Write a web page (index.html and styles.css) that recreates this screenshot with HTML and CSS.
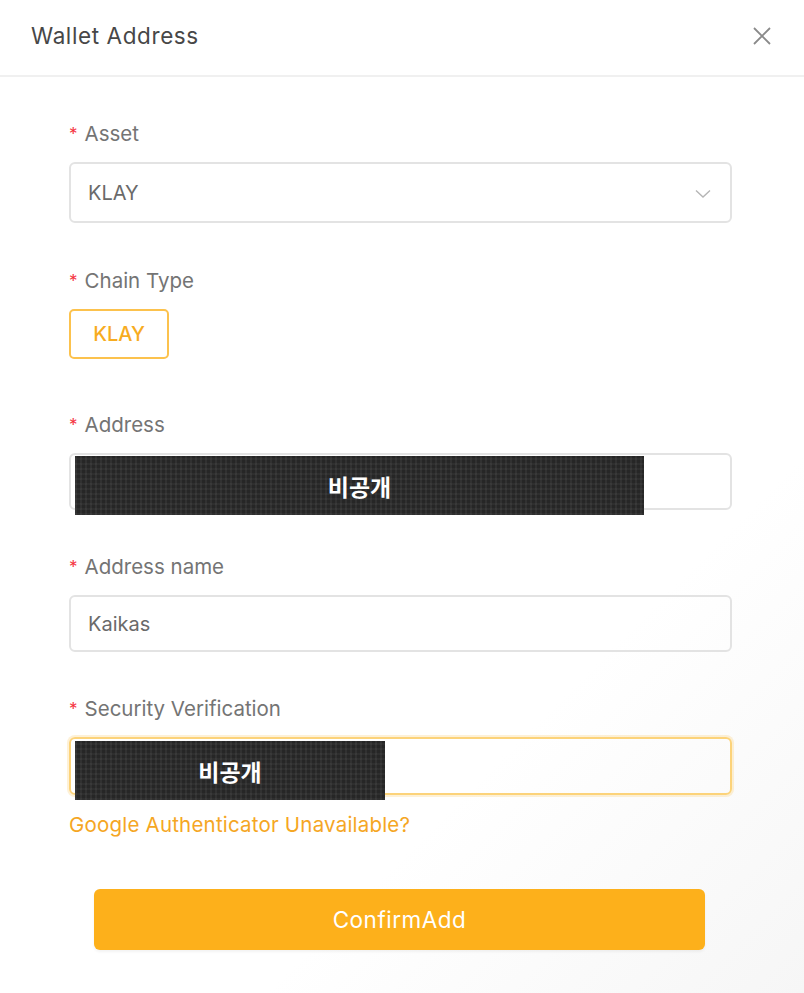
FILE: index.html
```html
<!DOCTYPE html>
<html>
<head>
<meta charset="utf-8">
<link rel="stylesheet" href="styles.css">
</head>
<body>
<div class="modal">
  <header class="head">
    <div class="title">Wallet Address</div>
    <svg class="close" width="20" height="20" viewBox="0 0 20 20"><path d="M2 2 L18 18 M18 2 L2 18" stroke="#8a8a8a" stroke-width="1.8" fill="none"/></svg>
  </header>
  <form class="form">
    <div class="field f-asset">
      <label class="label"><span class="req">*</span>Asset</label>
      <div class="input select">
        <span class="val">KLAY</span>
        <svg class="chev" width="16" height="10" viewBox="0 0 16 10"><path d="M1 1.5 L8 8 L15 1.5" stroke="#b5b5b5" stroke-width="1.4" fill="none"/></svg>
      </div>
    </div>
    <div class="field f-chain">
      <label class="label"><span class="req">*</span>Chain Type</label>
      <div class="chip">KLAY</div>
    </div>
    <div class="field f-addr">
      <label class="label"><span class="req">*</span>Address</label>
      <div class="input short">
        <div class="redact r1">비공개</div>
      </div>
    </div>
    <div class="field f-name">
      <label class="label"><span class="req">*</span>Address name</label>
      <div class="input short"><span class="val">Kaikas</span></div>
    </div>
    <div class="field f-sec">
      <label class="label"><span class="req">*</span>Security Verification</label>
      <div class="input sec focus">
        <div class="redact r2">비공개</div>
      </div>
      <a class="link">Google Authenticator Unavailable?</a>
    </div>
    <div class="actions">
      <div class="btn">ConfirmAdd</div>
    </div>
  </form>
</div>
</body>
</html>
```
FILE: styles.css
```css
* { box-sizing: border-box; }
html, body { margin: 0; padding: 0; }
body {
  width: 804px;
  height: 993px;
  overflow: hidden;
  font-family: Inter, Roboto, "Liberation Sans", sans-serif;
  background: linear-gradient(135deg, #ffffff 0%, #ffffff 70%, #f6f6f6 100%);
}
.modal { width: 804px; height: 993px; }
.head {
  height: 77px;
  border-bottom: 2px solid #f0f0f0;
  display: flex;
  align-items: center;
  justify-content: space-between;
  padding: 0 31px 4px 31px;
}
.title {
  font-size: 22.5px;
  color: #474747;
  letter-spacing: 0.6px;
}
.close { margin-right: 1px; }
.form {
  padding: 42px 72px 0 69px;
  display: flex;
  flex-direction: column;
}
.label {
  display: block;
  height: 26px;
  padding-top: 3px;
  line-height: 23px;
  font-size: 20.5px;
  color: #747474;
  margin-bottom: 17px;
}
.req {
  color: #f5333f;
  font-size: 17px;
  margin-right: 7px;
  position: relative;
  top: -1px;
}
.input {
  position: relative;
  height: 61px;
  border: 2px solid #e3e3e3;
  border-radius: 6px;
  display: flex;
  align-items: center;
  padding: 0 17px;
}
.input.short { height: 57px; }
.input.sec { height: 58px; }
.input.focus {
  border-color: #fcd37a;
  box-shadow: 0 0 0 2px rgba(252, 200, 90, 0.25);
}
.val { font-size: 20px; color: #6a6a6a; }
.select { justify-content: space-between; }
.chev { margin-right: 2px; margin-top: 2px; }
.f-asset { margin-bottom: 43px; }
.f-chain { margin-bottom: 51px; }
.f-addr { margin-bottom: 42px; }
.f-name { margin-bottom: 42px; }
.chip {
  width: 100px;
  height: 50px;
  border: 2px solid #fcc24d;
  border-radius: 5px;
  color: #f7ac1f;
  font-size: 20px;
  font-weight: 500;
  display: flex;
  align-items: center;
  justify-content: center;
}
.redact {
  position: absolute;
  top: 1px;
  height: 59px;
  background-color: #262626;
  background-image:
    repeating-linear-gradient(90deg, rgba(255,255,255,0.05) 0 2px, transparent 2px 5px),
    repeating-linear-gradient(0deg, rgba(255,255,255,0.04) 0 2px, transparent 2px 5px);
  color: #fff;
  font-family: "Noto Sans CJK KR", sans-serif;
  font-weight: 700;
  font-size: 23px;
  display: flex;
  align-items: center;
  justify-content: center;
}
.r1 { left: 4px; width: 569px; }
.r2 { left: 4px; width: 310px; top: 2px; }
.link {
  display: block;
  margin-top: 17px;
  font-size: 20.5px;
  color: #f5a623;
  line-height: 26px;
  letter-spacing: 0.2px;
}
.actions {
  padding: 51px 27px 0 25px;
}
.btn {
  height: 61px;
  background: #fdb01b;
  border-radius: 6px;
  color: #fff;
  font-size: 22.5px;
  letter-spacing: 0.5px;
  display: flex;
  align-items: center;
  justify-content: center;
  box-shadow: 0 2px 3px rgba(0,0,0,0.05);
}
```
